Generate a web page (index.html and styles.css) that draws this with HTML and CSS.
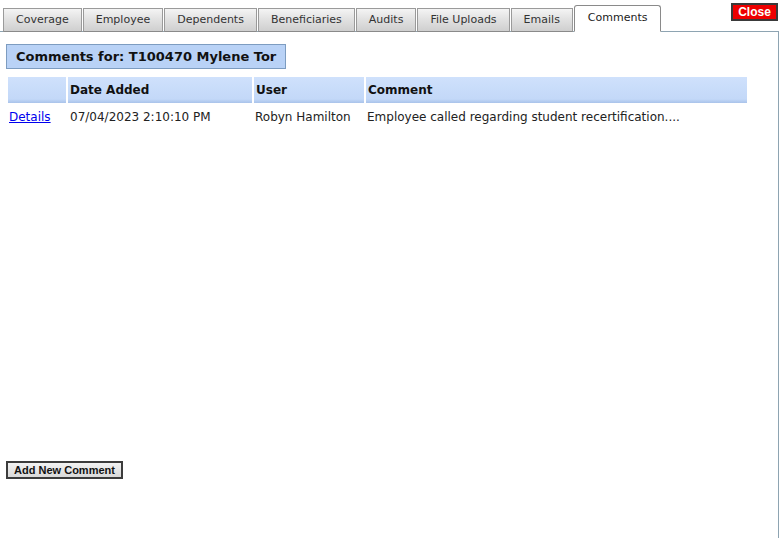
FILE: index.html
```html
<!DOCTYPE html>
<html>
<head>
<meta charset="utf-8">
<link rel="stylesheet" href="styles.css">
</head>
<body>
<div class="page">
  <div class="tabbar">
    <div class="tab">Coverage</div>
    <div class="tab">Employee</div>
    <div class="tab">Dependents</div>
    <div class="tab">Beneficiaries</div>
    <div class="tab">Audits</div>
    <div class="tab">File Uploads</div>
    <div class="tab">Emails</div>
    <div class="tab active">Comments</div>
  </div>
  <button class="close">Close</button>
  <div class="panel">
    <div class="title">Comments for: T100470 Mylene Tor</div>
    <div class="list">
      <table class="grid">
        <thead>
          <tr>
            <th class="c1"></th>
            <th class="c2">Date Added</th>
            <th class="c3">User</th>
            <th class="c4">Comment</th>
          </tr>
        </thead>
        <tbody>
          <tr>
            <td><a href="#">Details</a></td>
            <td>07/04/2023 2:10:10 PM</td>
            <td>Robyn Hamilton</td>
            <td>Employee called regarding student recertification....</td>
          </tr>
        </tbody>
      </table>
    </div>
    <button class="add">Add New Comment</button>
  </div>
</div>
</body>
</html>
```
FILE: styles.css
```css
html, body {
  margin: 0;
  padding: 0;
  background: #fff;
}
body {
  font-family: "DejaVu Sans", Verdana, sans-serif;
  color: #000;
}
.page {
  position: relative;
  width: 779px;
}
.tabbar {
  display: flex;
  align-items: flex-end;
  padding-left: 3px;
  height: 31px;
  box-sizing: border-box;
  position: relative;
  z-index: 1;
}
.tab {
  height: 24px;
  box-sizing: border-box;
  border: 1px solid #9a9a9a;
  border-bottom-color: #8a8a8a;
  background: linear-gradient(#f4f4f4, #e2e2e2 45%, #cfcfcf);
  font-size: 11px;
  line-height: 22px;
  color: #333;
  padding: 0 12px;
  margin-right: 1px;
  margin-bottom: -1px;
  white-space: nowrap;
}
.tab.active {
  height: 27px;
  background: #fff;
  border-color: #8a8a8a;
  border-bottom: 1px solid #fff;
  border-radius: 3px 3px 0 0;
  line-height: 24px;
  color: #222;
  padding: 0 13px;
}
.close {
  position: absolute;
  top: 3px;
  left: 731px;
  width: 47px;
  height: 18px;
  box-sizing: border-box;
  border: 2px solid #3a3a3a;
  background: #ee0000;
  color: #fff;
  font-family: "Liberation Sans", Arial, sans-serif;
  font-weight: bold;
  font-size: 12px;
  line-height: 13px;
  padding: 0;
  z-index: 2;
}
.panel {
  border-top: 1px solid #8ea4b2;
  border-right: 1px solid #8ea4b2;
  padding: 12px 0 0 6px;
  height: 507px;
  box-sizing: border-box;
}
.title {
  display: inline-block;
  background: #b9d2f6;
  border: 1px solid #7d9cc0;
  font-weight: bold;
  font-size: 13px;
  line-height: 23px;
  padding: 0 9px;
  color: #111;
}
.list {
  height: 386px;
  margin-top: 6px;
}
.grid {
  border-collapse: separate;
  border-spacing: 2px 2px;
  width: 743px;
  font-size: 12px;
}
.grid th {
  text-align: left;
  font-weight: bold;
  height: 26px;
  padding: 0 2px;
  background: linear-gradient(#cfe1fc, #c3d8f8 85%, #a9c3ea);
  color: #111;
}
.grid th.c1 { width: 54px; }
.grid th.c2 { width: 180px; }
.grid th.c3 { width: 106px; }
.grid td {
  padding: 0 1px;
  height: 24px;
  color: #222;
  white-space: nowrap;
}
.grid td:nth-child(2) {
  padding-left: 2px;
}
.grid a {
  color: #0000ee;
}
.add {
  display: block;
  width: 117px;
  height: 18px;
  box-sizing: border-box;
  border: 2px solid #3c3c3c;
  background: linear-gradient(#f2f2f2, #d9d9d9);
  font-family: "Liberation Sans", Arial, sans-serif;
  font-weight: bold;
  font-size: 11px;
  line-height: 13px;
  padding: 0;
  color: #111;
}
```
